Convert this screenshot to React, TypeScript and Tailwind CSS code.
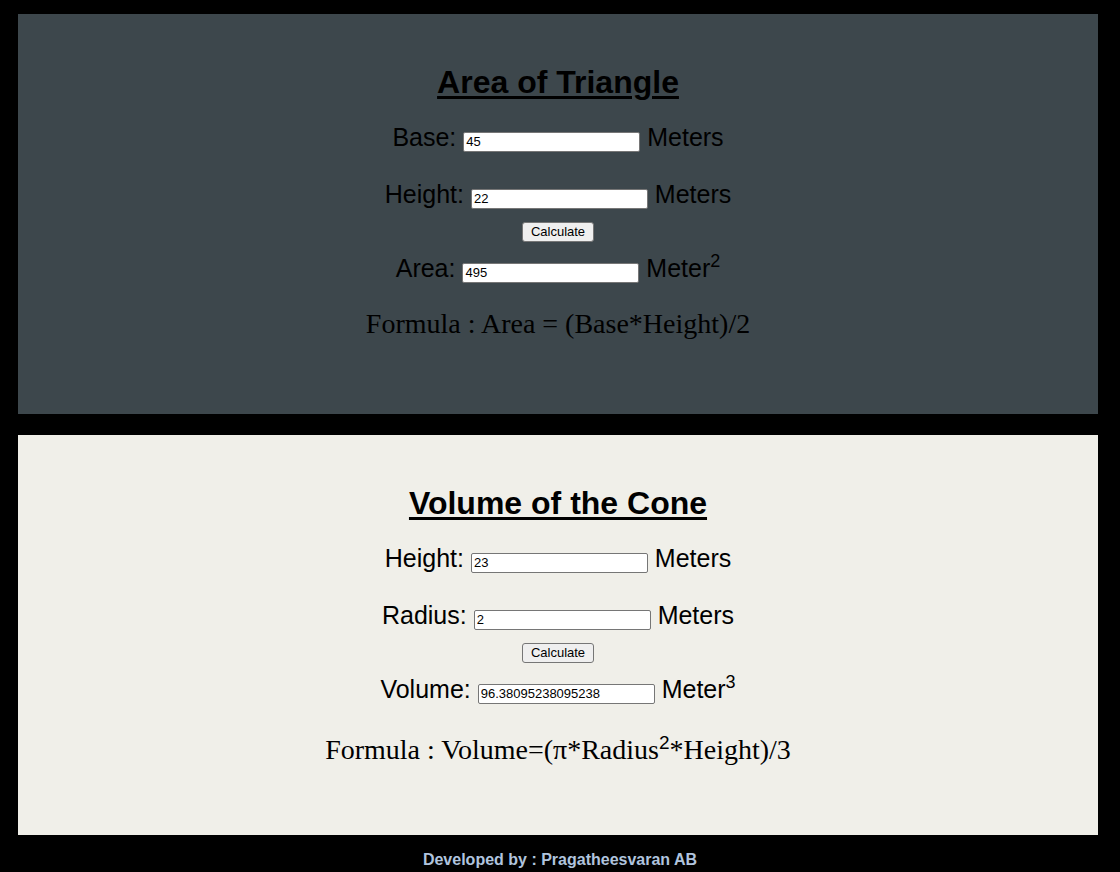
import React from "react";

const arial = "font-['Liberation_Sans',Arial,sans-serif]";
const serif = "font-['Liberation_Serif','Times_New_Roman',serif]";

function Field({ value }: { value: string }) {
  return (
    <input
      readOnly
      value={value}
      className={`${arial} inline-block w-[177px] h-[20px] px-[2px] py-[1px] align-baseline bg-white text-black text-[13px] leading-[16px] border border-[#767676] rounded-[2px] outline-none`}
    />
  );
}

function CalcButton() {
  return (
    <button
      className={`${arial} w-[72px] h-[20px] bg-[#efefef] text-black text-[13px] leading-[16px] border border-[#767676] rounded-[3px]`}
    >
      Calculate
    </button>
  );
}

function Panel({
  bg,
  title,
  rows,
  result,
  formula,
  formulaGap,
}: {
  bg: string;
  title: string;
  rows: { label: string; value: string }[];
  result: { label: string; value: string; power: string };
  formula: React.ReactNode;
  formulaGap: string;
}) {
  return (
    <section className={`${bg} ml-[18px] w-[1080px] h-[400px] text-black text-center`}>
      <h1 className={`${arial} pt-[48px] h-[88px] text-[32px] leading-[40px] font-bold underline underline-offset-[3px] decoration-[3px]`}>
        {title}
      </h1>
      <div className={`${arial} mt-[21px] h-[28px] text-[25px] leading-[28px]`}>
        {rows[0].label}: <Field value={rows[0].value} /> Meters
      </div>
      <div className={`${arial} mt-[29px] h-[28px] text-[25px] leading-[28px]`}>
        {rows[1].label}: <Field value={rows[1].value} /> Meters
      </div>
      <div className="mt-[14px] h-[20px] flex justify-center">
        <CalcButton />
      </div>
      <div className={`${arial} mt-[12px] h-[28px] text-[25px] leading-[28px]`}>
        {result.label}: <Field value={result.value} /> Meter
        <sup className="text-[18px] top-[-0.55em]">{result.power}</sup>
      </div>
      <div className={`${serif} ${formulaGap} text-[28px] leading-[32px]`}>{formula}</div>
    </section>
  );
}

export default function App() {
  return (
    <div className="min-h-[872px] bg-black pt-[14px]">
      <Panel
        bg="bg-[#3d474c]"
        title="Area of Triangle"
        rows={[
          { label: "Base", value: "45" },
          { label: "Height", value: "22" },
        ]}
        result={{ label: "Area", value: "495", power: "2" }}
        formula={<>Formula : Area = (Base*Height)/2</>}
        formulaGap="mt-[26px]"
      />
      <div className="h-[21px]" />
      <Panel
        bg="bg-[#f0efe9]"
        title="Volume of the Cone"
        rows={[
          { label: "Height", value: "23" },
          { label: "Radius", value: "2" },
        ]}
        result={{ label: "Volume", value: "96.38095238095238", power: "3" }}
        formula={
          <>
            Formula : Volume=(π*Radius<sup className={`${arial} text-[19px] top-[-0.55em]`}>2</sup>*Height)/3
          </>
        }
        formulaGap="mt-[31px]"
      />
      <p className={`${arial} mt-[16px] text-center text-[16px] leading-[18px] font-bold text-[#b0c4de]`}>
        Developed by : Pragatheesvaran AB
      </p>
    </div>
  );
}
